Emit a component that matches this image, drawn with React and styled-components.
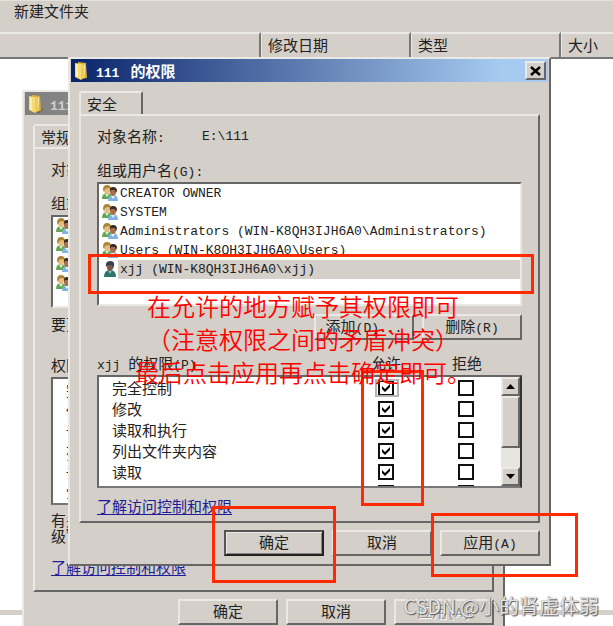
import React from 'react';
import styled, { createGlobalStyle, css } from 'styled-components';

const GlobalStyle = createGlobalStyle`
  * {
    box-sizing: border-box;
  }

  body {
    margin: 0;
    background: #fff;
    color: #222;
    font-family: 'Noto Sans CJK SC', sans-serif;
    font-size: 15px;
    line-height: 20px;
  }

  button,
  input {
    margin: 0;
    padding: 0;
    color: inherit;
    font: inherit;
  }
`;

const raised = css`
  border: 2px solid;
  border-color: #ebe9e5 #666 #666 #ebe9e5;
`;

const sunken = css`
  border: 2px solid;
  border-color: #666 #ebe9e5 #ebe9e5 #666;
`;

const Desktop = styled.main`
  position: relative;
  display: flex;
  overflow: hidden;
  height: 100vh;
  flex-direction: column;
`;

const Toolbar = styled.div`
  height: 32px;
  padding: 0 14px;
  border-top: 1px solid #e4e1dc;
  background: #d4cfc8;
`;

const ToolButton = styled.button`
  border: 0;
  background: none;
`;

const ColumnBar = styled.div`
  display: grid;
  height: 27px;
  grid-template-columns: 261px 150px 150px 1fr;
  border-bottom: 2px solid #777;
`;

const Column = styled.button`
  padding: 0 0 2px 6px;
  border: 0;
  border-top: 2px solid #ebe9e5;
  border-right: 2px solid #777;
  border-left: 1px solid #ebe9e5;
  background: #d4cfc8;
  text-align: left;

  &:first-child {
    border-left: 0;
  }

  &:last-child {
    border-right: 0;
  }
`;

const FileArea = styled.div`
  flex: 1;
  background: #fff;
`;

const Splitter = styled.div`
  height: 5px;
  margin-bottom: 11px;
  background: #d4cfc8;
`;

const Window = styled.section`
  ${raised};
  position: absolute;
  z-index: ${(props) => props.$level};
  top: ${(props) => props.$top}px;
  left: ${(props) => props.$left}px;
  width: 483px;
  background: #d4cfc8;
`;

const TitleBar = styled.header`
  display: flex;
  height: 23px;
  align-items: center;
  margin: 0 1px;
  padding: 0 2px 0 3px;
  background: ${(props) =>
    props.$active
      ? 'linear-gradient(90deg, #0a246a, #a6caf0 90%)'
      : 'linear-gradient(90deg, #808080, #c0c0c0)'};
  color: ${(props) => (props.$active ? '#fff' : '#d4cfc8')};
`;

const Title = styled.h1`
  flex: 1;
  margin: 0 0 0 6px;
  font-size: 15px;
  font-weight: 700;
  line-height: 20px;
  white-space: pre;
`;

const CloseButton = styled.button`
  ${raised};
  display: flex;
  width: 21px;
  height: 19px;
  align-items: center;
  justify-content: center;
  background: #d4cfc8;
`;

const Latin = styled.span`
  font-family: 'Liberation Mono', monospace;
  font-size: 13px;
  line-height: 1;
`;

const Content = styled.div`
  padding: 9px 9px 8px;
`;

const Tab = styled.button`
  display: block;
  width: 64px;
  height: 23px;
  padding-left: 6px;
  border: 2px solid;
  border-color: #ebe9e5 #666 transparent #ebe9e5;
  border-bottom: 0;
  border-radius: 3px 2px 0 0;
  background: #d4cfc8;
  text-align: left;
`;

const Panel = styled.div`
  ${raised};
  position: relative;
  padding: 10px 16px ${(props) => props.$bottom}px;
`;

const ObjectRow = styled.div`
  display: grid;
  height: 20px;
  align-items: center;
  margin-bottom: 14px;
  grid-template-columns: 105px 1fr;
`;

const Caption = styled.div`
  margin-bottom: 2px;
`;

const GroupList = styled.ul`
  ${sunken};
  height: ${(props) => props.$height}px;
  margin: 0;
  padding: 0;
  background: #fff;
  list-style: none;
`;

const GroupItem = styled.li`
  position: relative;
  display: flex;
  height: 19px;
  align-items: center;
  padding-left: 3px;
`;

const GroupName = styled.span`
  flex: 1;
  padding-left: 2px;
  background: ${(props) => (props.$selected ? '#d4cfc8' : 'none')};
  font-family: 'Liberation Mono', monospace;
  font-size: 13px;
  line-height: 19px;
  white-space: nowrap;
`;

const ButtonRow = styled.div`
  display: flex;
  justify-content: flex-end;
  margin-top: ${(props) => props.$gap}px;
  gap: 8px;
`;

const ButtonSlot = styled.div`
  position: relative;
`;

const Button = styled.button`
  ${raised};
  display: block;
  width: 100px;
  height: 26px;
  padding-bottom: 2px;
  background: #d4cfc8;
  line-height: 20px;

  ${(props) =>
    props.$primary &&
    css`
      border-color: #555 #222 #222 #555;
      box-shadow: inset 1px 1px #ebe9e5, inset -1px -1px #888;
    `}

  &:disabled {
    color: #909090;
    text-shadow: 1px 1px #fff;
  }
`;

const PermissionHead = styled.div`
  display: grid;
  margin: 13px 0 2px;
  grid-template-columns: 1fr 81px 70px;
`;

const PermissionFrame = styled.div`
  position: relative;
`;

const PermissionBox = styled.div`
  ${sunken};
  display: flex;
  overflow: hidden;
  height: ${(props) => props.$height}px;
  border-right-color: #333;
  border-bottom-color: #777;
  background: #fff;
`;

const PermissionTable = styled.table`
  flex: 1;
  align-self: flex-start;
  border-collapse: collapse;
  table-layout: fixed;

  th,
  td {
    height: 21px;
    padding: 0;
    font-weight: 400;
    line-height: 20px;
    text-align: left;
  }

  th {
    padding-left: 13px;
  }

  td:nth-child(2) {
    width: 80px;
  }

  td:nth-child(3) {
    width: 43px;
  }
`;

const Check = styled.input`
  display: block;
  width: 16px;
  height: 16px;
  border: 2px solid #111;
  appearance: none;
  background: #fff;

  &:checked {
    background: #fff
      url("data:image/svg+xml,%3Csvg xmlns='http://www.w3.org/2000/svg' viewBox='0 0 12 12'%3E%3Cpath d='M2 4v3l3 3 5-5V2L5 7z'/%3E%3C/svg%3E")
      center / 12px;
  }

  &:focus-visible {
    outline: 2px solid #aaa;
  }
`;

const FocusBox = styled.div`
  width: 22px;
  margin-left: -2px;
  padding-left: 2px;
  outline: ${(props) => (props.$on ? '2px solid #b5b5b5' : 'none')};
  outline-offset: -1px;
`;

const ScrollBar = styled.div`
  display: flex;
  width: 19px;
  flex-direction: column;
  background: #e6e4df;
`;

const ScrollButton = styled.button`
  ${raised};
  display: flex;
  height: 19px;
  flex: none;
  align-items: center;
  justify-content: center;
  background: #d4cfc8;
`;

const ScrollThumb = styled.div`
  ${raised};
  height: 52px;
  margin-bottom: auto;
  background: #d4cfc8;
`;

const HelpLink = styled.a`
  display: table;
  margin-top: ${(props) => props.$gap}px;
  color: #1d1d99;
  text-decoration: underline;
  text-underline-offset: 2px;
`;

const Hint = styled.p`
  width: 260px;
  margin: 0;
  padding-top: 7px;
  line-height: 16px;
`;

const EditHint = styled.p`
  margin: 6px 0 21px;
`;

const Mark = styled.span`
  position: absolute;
  z-index: 2;
  top: ${(props) => props.$top}px;
  right: ${(props) => props.$right}px;
  bottom: ${(props) => props.$bottom}px;
  left: ${(props) => (props.$width ? 'auto' : `${props.$left}px`)};
  width: ${(props) => (props.$width ? `${props.$width}px` : 'auto')};
  border: 3px solid #ff2a00;
  pointer-events: none;
`;

const Note = styled.p`
  position: absolute;
  z-index: 3;
  top: 173px;
  right: 0;
  left: 0;
  margin: 0 13px 0 0;
  color: #f00;
  font-size: 24px;
  font-weight: 350;
  line-height: 33px;
  pointer-events: none;
  text-align: center;
  white-space: nowrap;
`;

const Watermark = styled.div`
  position: absolute;
  z-index: 4;
  right: 14px;
  bottom: 6px;
  color: #e6e6e6;
  font-size: 20px;
  line-height: 28px;
  text-shadow: 1px 1px 1px #555, 0 0 1px #777;
`;

const FolderIcon = () => (
  <svg width="16" height="20" viewBox="0 0 16 20" aria-hidden="true">
    <path d="M10 14l5 1-3 4-5-1z" fill="#222" opacity="0.35" />
    <path d="M4 1l8 1 1 15-7 1z" fill="#dcae38" />
    <path d="M6 3l5 1v12l-4 1z" fill="#fff6cf" />
    <path d="M1 2l6 1v16l-6-3z" fill="#f5db74" />
    <path d="M7 3l3 1 1 12-4 3z" fill="#edc95a" />
    <path d="M2 3l2 1v12l-2-1z" fill="#fcefa9" />
  </svg>
);

const UsersIcon = () => (
  <svg width="16" height="17" viewBox="0 0 16 17" aria-hidden="true">
    <path d="M0 14q0-6 5-6t5 6z" fill="#63a553" />
    <path d="M3 9l2 3 2-3z" fill="#d9efcb" />
    <ellipse cx="5" cy="5" rx="3" ry="4" fill="#e9bd82" />
    <path d="M1 5q0-5 4-5t4 4l-3-1-3 1-1 3z" fill="#a98536" />
    <path d="M6 16q0-6 5-6t5 6z" fill="#7fb2e5" />
    <path d="M9 11l2 3 2-3z" fill="#e8f5ff" />
    <ellipse cx="11" cy="7" rx="3" ry="4" fill="#a8704b" />
    <path d="M8 7q-1-5 3-5t4 4l-1 2-1-3-4 0z" fill="#3b2b25" />
  </svg>
);

const UserIcon = () => (
  <svg width="16" height="17" viewBox="0 0 16 17" aria-hidden="true">
    <path d="M2 16q0-7 6-7t6 7z" fill="#2d756d" />
    <path d="M6 9l2 4 2-4z" fill="#9cc8c0" />
    <ellipse cx="8" cy="6" rx="3" ry="4" fill="#7a5647" />
    <path d="M4 6q-1-6 4-6t4 5l-1 3-1-4-4 0z" fill="#36404a" />
  </svg>
);

const groups = [
  'CREATOR OWNER',
  'SYSTEM',
  'Administrators (WIN-K8QH3IJH6A0\\Administrators)',
  'Users (WIN-K8QH3IJH6A0\\Users)',
];

const permissions = [
  '完全控制',
  '修改',
  '读取和执行',
  '列出文件夹内容',
  '读取',
  '写入',
];

const GroupRows = () =>
  groups.map((name) => (
    <GroupItem key={name}>
      <UsersIcon />
      <GroupName>{name}</GroupName>
    </GroupItem>
  ));

const ObjectName = () => (
  <ObjectRow>
    <span>
      对象名称<Latin>:</Latin>
    </span>
    <Latin>E:\111</Latin>
  </ObjectRow>
);

const GroupCaption = () => (
  <Caption>
    组或用户名<Latin>(G):</Latin>
  </Caption>
);

const PropertiesWindow = () => (
  <Window $top={90} $left={22} $level={1}>
    <TitleBar>
      <FolderIcon />
      <Title>
        <Latin>111 </Latin>属性
      </Title>
    </TitleBar>
    <Content>
      <Tab>常规</Tab>
      <Panel $bottom={13}>
        <ObjectName />
        <GroupCaption />
        <GroupList $height={93}>
          <GroupRows />
        </GroupList>
        <EditHint>要更改权限，请单击“编辑”。</EditHint>
        <Caption>权限</Caption>
        <PermissionBox $height={128}>
          <PermissionTable>
            <tbody>
              {permissions.map((name) => (
                <tr key={name}>
                  <th scope="row">{name}</th>
                </tr>
              ))}
            </tbody>
          </PermissionTable>
        </PermissionBox>
        <Hint>有关特殊权限或高级设置，请单击“高级”。</Hint>
        <HelpLink href="#acl" $gap={13}>
          了解访问控制和权限
        </HelpLink>
      </Panel>
      <ButtonRow $gap={7}>
        <Button>确定</Button>
        <Button>取消</Button>
        <Button disabled>
          应用<Latin>(A)</Latin>
        </Button>
      </ButtonRow>
    </Content>
  </Window>
);

const PermissionsWindow = () => (
  <Window $top={57} $left={68} $level={2}>
    <TitleBar $active>
      <FolderIcon />
      <Title>
        <Latin>111 </Latin> 的权限
      </Title>
      <CloseButton aria-label="关闭">
        <svg width="11" height="10" viewBox="0 0 11 10" aria-hidden="true">
          <path d="M1 1l9 8M10 1L1 9" stroke="#000" strokeWidth="2.4" />
        </svg>
      </CloseButton>
    </TitleBar>
    <Content>
      <Tab>安全</Tab>
      <Panel $bottom={5}>
        <ObjectName />
        <GroupCaption />
        <GroupList $height={124}>
          <GroupRows />
          <GroupItem>
            <UserIcon />
            <GroupName $selected>xjj (WIN-K8QH3IJH6A0\xjj)</GroupName>
            <Mark $top={-6} $right={-14} $bottom={-15} $left={-11} />
          </GroupItem>
        </GroupList>
        <ButtonRow $gap={8}>
          <Button>
            添加<Latin>(D)...</Latin>
          </Button>
          <Button>
            删除<Latin>(R)</Latin>
          </Button>
        </ButtonRow>
        <PermissionHead>
          <span>
            <Latin>xjj </Latin>的权限<Latin>(P)</Latin>
          </span>
          <span>允许</span>
          <span>拒绝</span>
        </PermissionHead>
        <PermissionFrame>
          <PermissionBox $height={113}>
            <PermissionTable>
              <tbody>
                {permissions.map((name, index) => (
                  <tr key={name}>
                    <th scope="row">{name}</th>
                    <td>
                      <FocusBox $on={index === 0}>
                        <Check
                          type="checkbox"
                          aria-label={`允许 ${name}`}
                          defaultChecked
                        />
                      </FocusBox>
                    </td>
                    <td>
                      <Check type="checkbox" aria-label={`拒绝 ${name}`} />
                    </td>
                  </tr>
                ))}
              </tbody>
            </PermissionTable>
            <ScrollBar>
              <ScrollButton aria-label="向上滚动">
                <svg width="9" height="5" viewBox="0 0 9 5" aria-hidden="true">
                  <path d="M0 5l4.500-5L9 5z" />
                </svg>
              </ScrollButton>
              <ScrollThumb />
              <ScrollButton aria-label="向下滚动">
                <svg width="9" height="5" viewBox="0 0 9 5" aria-hidden="true">
                  <path d="M0 0h9L4.500 5z" />
                </svg>
              </ScrollButton>
            </ScrollBar>
          </PermissionBox>
          <Mark $top={-5} $right={98} $bottom={-18} $width={63} />
        </PermissionFrame>
        <HelpLink href="#acl" $gap={8}>
          了解访问控制和权限
        </HelpLink>
        <Note>
          在允许的地方赋予其权限即可
          <br />
          （注意权限之间的矛盾冲突）
          <br />
          最后点击应用再点击确定即可。
        </Note>
      </Panel>
      <ButtonRow $gap={7}>
        <ButtonSlot>
          <Button $primary>确定</Button>
          <Mark $top={-24} $right={-12} $bottom={-27} $left={-12} />
        </ButtonSlot>
        <Button>取消</Button>
        <ButtonSlot>
          <Button>
            应用<Latin>(A)</Latin>
          </Button>
          <Mark $top={-17} $right={-38} $bottom={-21} $left={-9} />
        </ButtonSlot>
      </ButtonRow>
    </Content>
  </Window>
);

const App = () => {
  return (
    <>
      <GlobalStyle />
      <Desktop>
        <Toolbar>
          <ToolButton>新建文件夹</ToolButton>
        </Toolbar>
        <ColumnBar>
          <Column aria-label="名称" />
          <Column>修改日期</Column>
          <Column>类型</Column>
          <Column>大小</Column>
        </ColumnBar>
        <FileArea />
        <Splitter />
        <PropertiesWindow />
        <PermissionsWindow />
        <Watermark>CSDN @小的肾虚体弱</Watermark>
      </Desktop>
    </>
  );
};

export default App;
